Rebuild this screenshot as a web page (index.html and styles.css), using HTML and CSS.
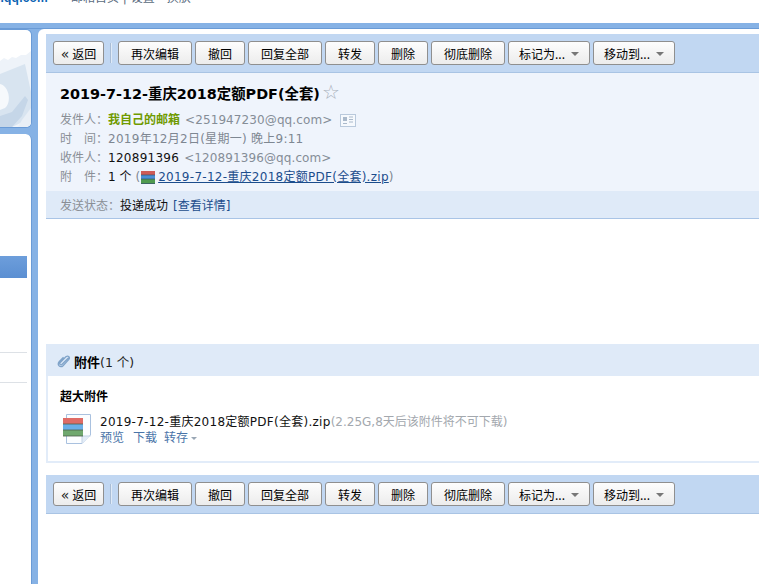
FILE: index.html
```html
<!DOCTYPE html>
<html lang="zh">
<head>
<meta charset="utf-8">
<title>邮件</title>
<link rel="stylesheet" href="styles.css">
</head>
<body>
<header class="top">
  <span class="brand">l.qq.com</span>
  <span class="toplinks">邮箱首页 | 设置 - 换肤</span>
</header>
<div class="band"></div>
<div class="frame">
  <aside class="side">
    <div class="side-pic">
      <svg class="swirl" width="31" height="97" viewBox="0 0 31 97">
        <rect width="31" height="97" fill="#fff"/>
        <path d="M0 31 L4 28 L8 30 L12 27 L16 28 L21 25 L26 25 L31 21 L31 97 L0 97 Z" fill="#eef3f9"/>
        <path d="M0 44 L25 34 L31 62 L31 88 L12 97 L0 97 Z" fill="#d8e4f0"/>
        <path d="M0 54 C9 56 12 72 5 78 L0 80 Z" fill="#f6f9fc"/>
        <path d="M0 86 L12 82 L25 66 L28 70 L22 86 L12 97 L0 97 Z" fill="#c5d6e8"/>
        <path d="M22 90 L31 78 L31 97 L18 97 Z" fill="#e9eff6"/>
      </svg>
    </div>
    <nav class="side-nav">
      <div class="side-active"></div>
      <div class="side-rule first"></div>
      <div class="side-rule second"></div>
    </nav>
  </aside>
  <main class="panel">
    <div class="toolbar">
      <button class="btn back"><span class="raquo">«</span> 返回</button>
      <span class="sep"></span>
      <button class="btn wide">再次编辑</button>
      <button class="btn">撤回</button>
      <button class="btn wide">回复全部</button>
      <button class="btn">转发</button>
      <button class="btn">删除</button>
      <button class="btn wide">彻底删除</button>
      <button class="btn menu">标记为...<i class="caret"></i></button>
      <button class="btn menu">移动到...<i class="caret"></i></button>
    </div>
    <section class="head">
      <h1 class="subject">2019-7-12-重庆2018定额PDF(全套)<span class="star">☆</span></h1>
      <div class="row"><span class="lbl">发件人：</span><b class="me">我自己的邮箱</b><span class="addr">&lt;251947230@qq.com&gt;</span>
        <svg class="card" width="16" height="13" viewBox="0 0 16 13"><rect x=".5" y=".5" width="15" height="12" fill="#f6f9fd" stroke="#b9c9dc"/><rect x="3" y="3" width="4" height="4" fill="#aab9cb"/><path d="M9 3h4M9 5.500h4M9 8h4M3 9.500h4" stroke="#aab9cb"/></svg>
      </div>
      <div class="row"><span class="lbl">时　间：</span><span class="grey wide-latin">2019年12月2日(星期一) 晚上9:11</span></div>
      <div class="row"><span class="lbl">收件人：</span><span class="dark wide-latin">120891396</span><span class="addr">&lt;120891396@qq.com&gt;</span></div>
      <div class="row"><span class="lbl">附　件：</span><span class="dark">1 个</span><span class="grey paren">(</span>
        <svg class="zip" width="14" height="13" viewBox="0 0 14 13"><rect width="14" height="4" fill="#cf5b57"/><rect width="14" height="4" y="4" fill="#4a8fd6"/><rect width="14" height="5" y="8" fill="#4f9a4f"/><path d="M0 4h14M0 8h14M0 12.500h14" stroke="#35506b" stroke-width=".7"/></svg>
        <a class="link wide-latin">2019-7-12-重庆2018定额PDF(全套).zip</a><span class="grey">)</span></div>
    </section>
    <div class="status"><span class="lbl">发送状态：</span><span class="dark">投递成功</span><a class="detail">[查看详情]</a></div>
    <div class="content"></div>
    <section class="attach">
      <div class="attach-title">
        <svg class="clip" width="14" height="15" viewBox="0 0 15 15"><path d="M12.500 3.500 L5.500 10.500 C4 12 2 10 3.500 8.500 L9.500 2.500 C12 0.500 14.500 3 12.500 5.500 L6.500 12 C3.500 15 -0.500 11 2.500 7.500 L7 3" fill="none" stroke="#7fa3c9" stroke-width="1.400"/></svg>
        <b>附件</b><span>(1 个)</span>
      </div>
      <div class="attach-body">
        <h2 class="attach-kind">超大附件</h2>
        <div class="file">
          <svg class="file-icon" width="28" height="30" viewBox="0 0 28 30">
            <path d="M3.500 .5 H27.500 V21 L19 29.500 H3.500 Z" fill="#fbfdff" stroke="#a9c1df"/>
            <path d="M19 29.500 V22 H27.500" fill="#e3ecf7" stroke="#c3d3e6"/>
            <rect x="0" y="4" width="20" height="6" fill="#df6b66"/>
            <rect x="0" y="10" width="20" height="6" fill="#6aaee8"/>
            <rect x="0" y="16" width="20" height="6" fill="#6fa86f"/>
            <path d="M0 10h20M0 16h20M0 22h20" stroke="#4b5f4b" stroke-width=".8"/>
          </svg>
          <div class="file-text">
            <div class="file-name">2019-7-12-重庆2018定额PDF(全套).zip<span class="file-meta">(2.25G,8天后该附件将不可下载)</span></div>
            <div class="file-ops"><a>预览</a><a>下载</a><a class="save">转存<i class="caret small"></i></a></div>
          </div>
        </div>
      </div>
    </section>
    <div class="toolbar lower">
      <button class="btn back"><span class="raquo">«</span> 返回</button>
      <span class="sep"></span>
      <button class="btn wide">再次编辑</button>
      <button class="btn">撤回</button>
      <button class="btn wide">回复全部</button>
      <button class="btn">转发</button>
      <button class="btn">删除</button>
      <button class="btn wide">彻底删除</button>
      <button class="btn menu">标记为...<i class="caret"></i></button>
      <button class="btn menu">移动到...<i class="caret"></i></button>
    </div>
  </main>
</div>
</body>
</html>
```

FILE: styles.css
```css
* { box-sizing: border-box; }
html, body { margin: 0; height: 584px; overflow: hidden; }
body {
  display: flex;
  flex-direction: column;
  background: #fff;
  font-family: "DejaVu Sans", "Noto Sans CJK SC", sans-serif;
  font-size: 12px;
  color: #000;
}
.top {
  flex: none;
  height: 32px;
  margin-top: -9px;
  overflow: hidden;
  display: flex;
  line-height: 14px;
}
.brand {
  color: #0b63b3;
  font-family: "Liberation Sans", sans-serif;
  font-weight: bold;
  font-size: 12px;
  letter-spacing: .2px;
  margin-left: -3px;
  width: 74px;
  white-space: nowrap;
}
.toplinks { color: #5a6b80; font-size: 12px; }
.band { flex: none; height: 6px; background: #86b2e5; border-bottom: 1px solid #6a9bd6; }
.frame {
  flex: 1;
  display: flex;
  gap: 6px;
  min-height: 0;
  background: #86b2e5;
}
.side { width: 32px; flex: none; display: flex; flex-direction: column; gap: 6px; }
.side-pic {
  height: 99px;
  border-radius: 0 6px 6px 0;
  overflow: hidden;
  border-right: 1px solid #6a9bd6;
  border-bottom: 1px solid #6a9bd6;
  border-top: 1px solid #6a9bd6;
}
.swirl { display: block; }
.side-nav {
  flex: 1;
  background: #fff;
  border-radius: 0 6px 0 0;
  padding-top: 122px;
  border-right: 1px solid #6a9bd6;
}
.side-active { height: 22px; width: 27px; background: linear-gradient(#6d9edb, #5b8fd2); }
.side-rule { height: 1px; width: 27px; background: #dde1e6; }
.side-rule.first { margin-top: 74px; }
.side-rule.second { margin-top: 29px; }
.panel {
  flex: 1;
  min-width: 0;
  background: #fff;
  border-radius: 6px 0 0 0;
  padding: 5px 0 0 8px;
  display: flex;
  flex-direction: column;
}
.toolbar {
  flex: none;
  height: 39px;
  background: #c1d7f2;
  border-bottom: 1px solid #a9c4e4;
  padding: 7px 0 0 7px;
  display: flex;
  gap: 3px;
  align-items: flex-start;
}
.btn {
  height: 24px;
  width: 50px;
  flex: none;
  padding: 2px 0 0;
  border: 1px solid #8f8f8f;
  border-radius: 3px;
  background: linear-gradient(#fdfdfd, #ececec);
  font-family: "Noto Sans CJK SC", sans-serif;
  font-size: 12px;
  line-height: 18px;
  color: #000;
  text-align: center;
}
.btn.back { width: 51px; }
.btn.wide { width: 74px; }
.btn.menu { width: 82px; display: flex; align-items: center; justify-content: center; gap: 6px; }
.raquo { color: #222; font-size: 14px; font-family: "DejaVu Sans", sans-serif; line-height: 14px; }
.sep { width: 1px; height: 20px; margin: 2px 4px 0 3px; background: #a9bdd6; box-shadow: 1px 0 0 #dfeaf7; }
.caret {
  display: inline-block;
  width: 0;
  height: 0;
  border: 4px solid transparent;
  border-top: 4px solid #777;
  border-bottom: 0;
}
.caret.small { border-width: 3.500px; border-bottom: 0; border-top-color: #9aa7b5; margin-left: 3px; vertical-align: 2px; }
.head {
  flex: none;
  height: 118px;
  background: #eff4fc;
  padding: 9px 0 0 14px;
  font-size: 12px;
}
.subject {
  margin: 0 0 6px;
  font-size: 14.400px;
  line-height: 22px;
  font-weight: bold;
  white-space: nowrap;
}
.star { color: #aab2bd; font-weight: normal; font-size: 20px; line-height: 20px; margin-left: 2px; }
.row { height: 19px; line-height: 19px; display: flex; align-items: center; white-space: pre; }
.lbl { color: #8a8f96; }
.grey { color: #7e8792; }
.wide-latin { letter-spacing: .27px; }
.paren { margin-left: 4px; }
.dark { color: #111; }
.me { color: #6f9a00; font-size: 12px; }
.addr { color: #858d97; margin-left: 5px; letter-spacing: .1px; }
.card { margin-left: 8px; }
.zip { margin: 0 3px 0 1px; }
.link { color: #1c4d8c; text-decoration: underline; }
.status {
  flex: none;
  height: 28px;
  background: #dfeaf8;
  border-bottom: 1px solid #a9c4e6;
  padding: 1px 0 0 14px;
  font-size: 12px;
  line-height: 28px;
}
.detail { color: #1c4d8c; margin-left: 5px; }
.content { flex: none; height: 125px; }
.attach { flex: none; }
.attach-title {
  height: 32px;
  background: #dfeaf8;
  padding: 2px 0 0 11px;
  display: flex;
  align-items: center;
  font-size: 12.500px;
  color: #222;
}
.attach-title b { margin-left: 3px; color: #000; font-size: 13px; }
.attach-body {
  height: 87px;
  border-left: 2px solid #e2ecf9;
  border-bottom: 2px solid #e2ecf9;
  padding: 14px 0 0 12px;
}
.attach-kind { margin: 0 0 10px; font-size: 12px; line-height: 14px; font-weight: bold; }
.file { display: flex; gap: 9px; margin-left: 3px; }
.file-icon { flex: none; margin-top: 0; }
.file-text { font-size: 12px; line-height: 16px; }
.file-name { white-space: nowrap; color: #111; letter-spacing: .27px; }
.file-meta { color: #a3a8ae; letter-spacing: 0; }
.file-ops { display: flex; gap: 9px; font-size: 12px; color: #4a74a8; line-height: 17px; }
.save { margin-left: -2px; }
.lower { margin-top: 12px; }
```
